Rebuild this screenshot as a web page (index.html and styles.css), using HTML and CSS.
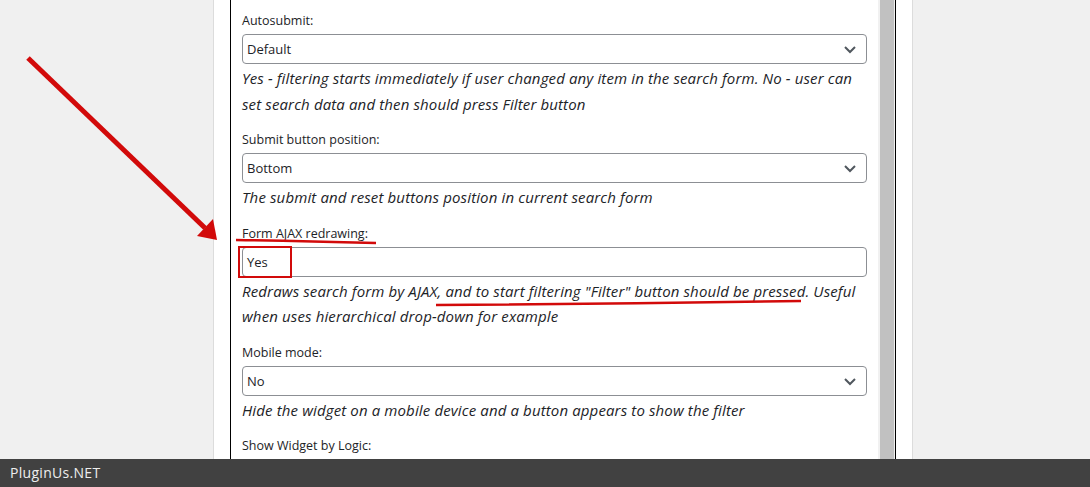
FILE: index.html
```html
<!DOCTYPE html>
<html>
<head>
<meta charset="utf-8">
<link rel="stylesheet" href="styles.css">
</head>
<body>
<div class="main">
  <div class="frame">
    <div class="panel">
      <div class="content">
        <div class="field">
          <label class="lbl">Autosubmit:</label>
          <div class="select"><span>Default</span><svg class="chev" width="16" height="16" viewBox="0 0 16 16"><path d="M3 6 L8 11 L13 6" fill="none" stroke="#50575e" stroke-width="2"/></svg></div>
          <p class="desc">Yes - filtering starts immediately if user changed any item in the search form. No - user can set search data and then should press Filter button</p>
        </div>
        <div class="field">
          <label class="lbl">Submit button position:</label>
          <div class="select"><span>Bottom</span><svg class="chev" width="16" height="16" viewBox="0 0 16 16"><path d="M3 6 L8 11 L13 6" fill="none" stroke="#50575e" stroke-width="2"/></svg></div>
          <p class="desc">The submit and reset buttons position in current search form</p>
        </div>
        <div class="field">
          <label class="lbl">Form AJAX redrawing:</label>
          <div class="select"><span>Yes</span></div>
          <p class="desc">Redraws search form by AJAX, and to start filtering "Filter" button should be pressed. Useful when uses hierarchical drop-down for example</p>
        </div>
        <div class="field">
          <label class="lbl">Mobile mode:</label>
          <div class="select"><span>No</span><svg class="chev" width="16" height="16" viewBox="0 0 16 16"><path d="M3 6 L8 11 L13 6" fill="none" stroke="#50575e" stroke-width="2"/></svg></div>
          <p class="desc">Hide the widget on a mobile device and a button appears to show the filter</p>
        </div>
        <div class="field">
          <label class="lbl">Show Widget by Logic:</label>
        </div>
      </div>
      <div class="scrollbar"><div class="thumb"></div></div>
    </div>
  </div>
</div>
<div class="footer">PluginUs.NET</div>
<svg class="marks" width="1090" height="487" viewBox="0 0 1090 487">
  <line x1="28" y1="58" x2="205" y2="228" stroke="#d20a0a" stroke-width="5"/>
  <polygon points="217,240 197,236 213,219" fill="#d20a0a"/>
  <path d="M236 240 Q 300 241 376 243" fill="none" stroke="#d20a0a" stroke-width="2.5"/>
  <rect x="239" y="247" width="52" height="30" fill="none" stroke="#d20a0a" stroke-width="2"/>
  <path d="M436 305 Q 620 304 801 301" fill="none" stroke="#d20a0a" stroke-width="2.5"/>
</svg>
</body>
</html>
```
FILE: styles.css
```css
html, body {
  margin: 0;
  padding: 0;
}
body {
  width: 1090px;
  height: 487px;
  overflow: hidden;
  background: #f0f0f0;
  font-family: "Open Sans", "Noto Sans", sans-serif;
  color: #1d2327;
  display: flex;
  flex-direction: column;
  position: relative;
}
.main {
  height: 459px;
  overflow: hidden;
  display: flex;
}
.frame {
  margin-left: 213px;
  width: 666px;
  border-left: 1px solid #dcdcdc;
  border-right: 1px solid #dcdcdc;
  background: #fff;
  padding: 0 16px;
  display: flex;
}
.panel {
  flex: 1;
  border-left: 1px solid #000;
  border-right: 1px solid #000;
  display: flex;
}
.content {
  flex: 1;
  padding: 10px 11px 0 11px;
}
.scrollbar {
  width: 17px;
  background: #f1f1f1;
  display: flex;
  padding-left: 2px;
  padding-right: 1px;
  box-sizing: border-box;
}
.thumb {
  flex: 1;
  background: #c1c1c1;
}
.field {
  margin-bottom: 12px;
}
.lbl {
  display: block;
  font-size: 12.5px;
  line-height: 20px;
  padding-top: 1px;
  margin-bottom: 3px;
}
.select {
  height: 30px;
  box-sizing: border-box;
  border: 1px solid #8c8f94;
  border-radius: 4px;
  display: flex;
  align-items: center;
  justify-content: space-between;
  padding: 0 8px 0 4px;
  font-size: 13px;
}
.chev {
  display: block;
}
.desc {
  margin: 2px 0 0;
  font-size: 15px;
  line-height: 25.5px;
  letter-spacing: 0.13px;
  font-style: italic;
  color: #1d2327;
}
.footer {
  height: 28px;
  background: #414141;
  color: #eeeeee;
  font-size: 14px;
  line-height: 28px;
  padding-left: 10px;
  letter-spacing: 0.3px;
}
.marks {
  position: absolute;
  left: 0;
  top: 0;
  pointer-events: none;
}
```
